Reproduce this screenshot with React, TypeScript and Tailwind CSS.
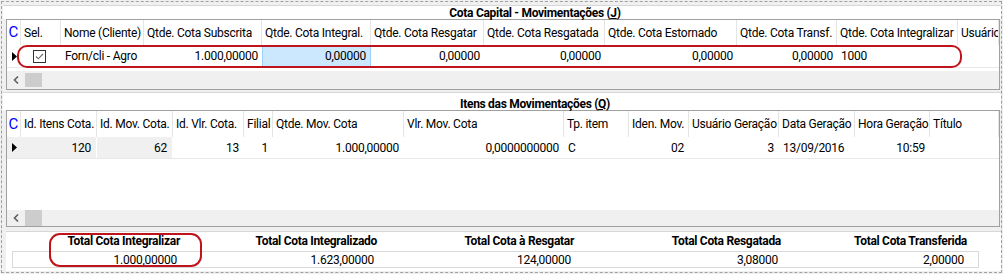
import type { ReactNode } from 'react'

type Col = { label: string; w: string }

const cotaCols: Col[] = [
  { label: 'Sel.', w: 'w-[40px]' },
  { label: 'Nome (Cliente)', w: 'w-[83px]' },
  { label: 'Qtde. Cota Subscrita', w: 'w-[118px]' },
  { label: 'Qtde. Cota Integral.', w: 'w-[109px]' },
  { label: 'Qtde. Cota Resgatar', w: 'w-[113px]' },
  { label: 'Qtde. Cota Resgatada', w: 'w-[121px]' },
  { label: 'Qtde. Cota Estornado', w: 'w-[132px]' },
  { label: 'Qtde. Cota Transf.', w: 'w-[100px]' },
  { label: 'Qtde. Cota Integralizar', w: 'w-[121px]' },
  { label: 'Usuário', w: 'flex-1' },
]

const itensCols: Col[] = [
  { label: 'Id. Itens Cota.', w: 'w-[76px]' },
  { label: 'Id. Mov. Cota.', w: 'w-[76px]' },
  { label: 'Id. Vlr. Cota.', w: 'w-[71px]' },
  { label: 'Filial', w: 'w-[29px]' },
  { label: 'Qtde. Mov. Cota', w: 'w-[131px]' },
  { label: 'Vlr. Mov. Cota', w: 'w-[160px]' },
  { label: 'Tp. item', w: 'w-[65px]' },
  { label: 'Iden. Mov.', w: 'w-[60px]' },
  { label: 'Usuário Geração', w: 'w-[90px]' },
  { label: 'Data Geração', w: 'w-[76px]' },
  { label: 'Hora Geração', w: 'w-[75px]' },
  { label: 'Título', w: 'flex-1' },
]

// linha da grade de itens: [valor, alinhamento, fundo cinza]
const itensRow: [string, 'l' | 'r', boolean][] = [
  ['120', 'r', true],
  ['62', 'r', true],
  ['13', 'r', false],
  ['1', 'r', false],
  ['1.000,00000', 'r', false],
  ['0,0000000000', 'r', false],
  ['C', 'l', false],
  ['02', 'r', false],
  ['3', 'r', false],
  ['13/09/2016', 'l', false],
  ['10:59', 'r', false],
  ['', 'l', false],
]

const totals = [
  { label: 'Total Cota Integralizar', value: '1.000,00000', w: 'w-[170px]' },
  { label: 'Total Cota Integralizado', value: '1.623,00000', w: 'w-[197px]' },
  { label: 'Total Cota à Resgatar', value: '124,00000', w: 'w-[197px]' },
  { label: 'Total Cota Resgatada', value: '3,08000', w: 'w-[207px]' },
  { label: 'Total Cota Transferida', value: '2,00000', w: 'w-[186px]' },
]

function RowArrow() {
  return (
    <svg width="5" height="9" viewBox="0 0 5 9">
      <path d="M0 0L5 4.5L0 9Z" fill="#000" />
    </svg>
  )
}

function CheckBox() {
  return (
    <svg width="13" height="13" viewBox="0 0 13 13">
      <rect x="0.5" y="0.5" width="12" height="12" fill="#fff" stroke="#333" />
      <path d="M3 6.5L5.3 8.8L10 4" fill="none" stroke="#6b6b6b" strokeWidth="1.1" />
    </svg>
  )
}

function HScroll({ h, thumb }: { h: string; thumb: string }) {
  return (
    <div className={`flex items-center bg-[#f0f0f0] ${h}`}>
      <svg className="ml-[6px]" width="6" height="8" viewBox="0 0 6 8">
        <path d="M5 0.5L1.5 4L5 7.5" fill="none" stroke="#606060" strokeWidth="1.6" />
      </svg>
      <div className={`ml-[6px] w-[17px] bg-[#cdcdcd] ${thumb}`} />
    </div>
  )
}

function HeaderRow({ cols, h }: { cols: Col[]; h: string }) {
  return (
    <div className={`flex ${h}`}>
      <div className="flex w-[14px] shrink-0 items-center justify-center border-r border-[#e5e5e5] text-[15px] leading-none tracking-normal text-[#0000ff]">
        C
      </div>
      {cols.map(c => (
        <div
          key={c.label}
          className={`flex shrink-0 items-center overflow-hidden whitespace-nowrap border-r border-[#e5e5e5] pl-[3px] ${c.w}`}
        >
          {c.label}
        </div>
      ))}
    </div>
  )
}

function Cell({ w, children, right, className = '' }: { w: string; children?: ReactNode; right?: boolean; className?: string }) {
  return (
    <div
      className={`flex shrink-0 items-center overflow-hidden whitespace-nowrap ${right ? 'justify-end pr-[4px]' : 'pl-[4px]'} ${w} ${className}`}
    >
      {children}
    </div>
  )
}

function PanelTitle({ children, className = '' }: { children: ReactNode; className?: string }) {
  return (
    <div className={`flex items-center justify-center border-t border-[#d7d7d7] bg-white pl-[66px] font-bold leading-[13px] tracking-[-0.3px] ${className}`}>
      {children}
    </div>
  )
}

export default function App() {
  return (
    <div className="relative h-[274px] w-[1003px] overflow-hidden bg-[#f0f0f0] p-px font-['Roboto','Liberation_Sans',sans-serif] text-[12px] tracking-[-0.25px] text-black">
      <div className="flex h-[272px] w-[1001px] flex-col border border-dashed border-[#a0a0a0]">
        {/* Cota Capital - Movimentações */}
        <div className="ml-px mt-[3px] w-[998px]">
          <PanelTitle className="h-[14px] pt-[2px]">
            <span>
              Cota Capital - Movimentações (<span className="underline">J</span>)
            </span>
          </PanelTitle>
          <div className="ml-[3px] w-[994px] border border-[#a0a0a0] bg-white">
            <HeaderRow cols={cotaCols} h="h-[25px]" />
            <div className="flex h-[23px] border-b border-[#e8e8e8]">
              <div className="flex w-[14px] shrink-0 items-center pl-[5px]">
                <RowArrow />
              </div>
              <Cell w="w-[40px]" className="pl-[12px]">
                <CheckBox />
              </Cell>
              <Cell w="w-[83px]">Forn/cli - Agro</Cell>
              <Cell w="w-[118px]" right>1.000,00000</Cell>
              <Cell w="w-[109px]" right className="border border-[#99d1ff] bg-[#cce8ff]">0,00000</Cell>
              <Cell w="w-[113px]" right>0,00000</Cell>
              <Cell w="w-[121px]" right>0,00000</Cell>
              <Cell w="w-[132px]" right>0,00000</Cell>
              <Cell w="w-[100px]" right>0,00000</Cell>
              <Cell w="w-[121px]">1000</Cell>
              <Cell w="flex-1" />
            </div>
            <div className="h-[3px]" />
            <HScroll h="h-[18px]" thumb="h-[14px]" />
          </div>
        </div>

        {/* Itens das Movimentações */}
        <div className="ml-px mt-[2px] w-[998px]">
          <PanelTitle className="h-[18px] pt-[6px]">
            <span>
              Itens das Movimentações (<span className="underline">Q</span>)
            </span>
          </PanelTitle>
          <div className="ml-[3px] w-[994px] border border-[#a0a0a0] bg-white">
            <HeaderRow cols={itensCols} h="h-[26px]" />
            <div className="flex h-[22px] border-b border-[#e8e8e8]">
              <div className="flex w-[14px] shrink-0 items-center bg-[#f0f0f0] pl-[5px]">
                <RowArrow />
              </div>
              {itensCols.map((c, i) => {
                const [v, align, grey] = itensRow[i]
                return (
                  <Cell
                    key={c.label}
                    w={c.w}
                    right={align === 'r'}
                    className={grey ? 'border-r border-white bg-[#f0f0f0] pr-[5px]' : align === 'r' ? 'pr-[5px]' : ''}
                  >
                    {v}
                  </Cell>
                )
              })}
            </div>
            <div className="h-[51px]" />
            <HScroll h="h-[16px]" thumb="h-[16px]" />
          </div>
        </div>

        {/* Totais */}
        <div className="ml-[4px] mt-[4px] h-[40px] w-[995px] border-t border-[#d7d7d7] bg-white">
          <div className="ml-[7px] flex h-[19px] items-end pb-px font-bold tracking-[-0.3px]">
            {totals.map(t => (
              <div key={t.label} className={`shrink-0 whitespace-nowrap pr-[3px] text-right ${t.w}`}>
                {t.label}
              </div>
            ))}
          </div>
          <div className="ml-[6px] flex h-[17px] w-[967px] border border-[#d9d9d9] pt-px">
            {totals.map(t => (
              <div key={t.label} className={`flex shrink-0 items-center justify-end pr-[6px] ${t.w}`}>
                {t.value}
              </div>
            ))}
          </div>
        </div>
      </div>

      {/* marcações em vermelho */}
      <div className="absolute left-[17px] top-[45px] h-[23px] w-[945px] rounded-[10px] border-2 border-[#c0141c]" />
      <div className="absolute left-[49px] top-[233px] h-[34px] w-[153px] rounded-[11px] border-2 border-[#c0141c]" />
    </div>
  )
}
